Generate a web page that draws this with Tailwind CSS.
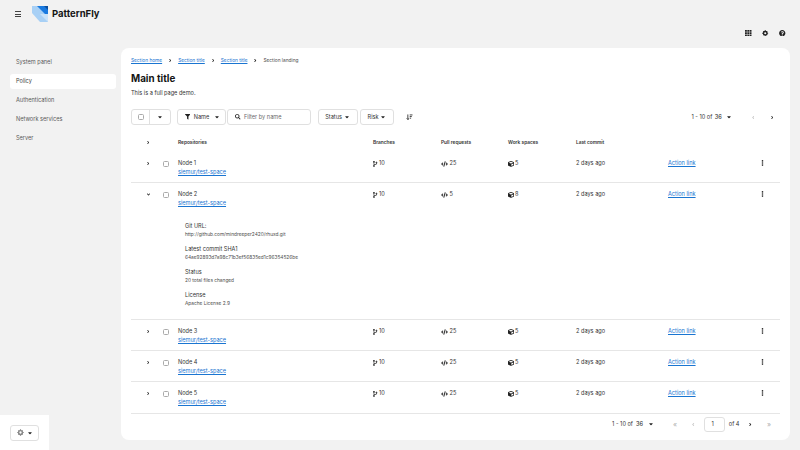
<!DOCTYPE html>
<html lang="en">
<head>
    <meta charset="UTF-8">
    <title>PatternFly - Full page demo</title>
    <script src="https://cdn.jsdelivr.net/npm/@tailwindcss/browser@4"></script>
</head>
<body>
    <!-- shared icons -->
    <svg class="hidden">
        <symbol id="i-right" viewBox="0 0 256 512"><path d="M224.3 273l-136 136c-9.4 9.4-24.6 9.4-33.9 0l-22.6-22.6c-9.4-9.4-9.4-24.6 0-33.9l96.4-96.4-96.4-96.4c-9.4-9.4-9.4-24.6 0-33.9L54.3 103c9.4-9.4 24.6-9.4 33.9 0l136 136c9.5 9.4 9.5 24.6.1 34z"/></symbol>
        <symbol id="i-left" viewBox="0 0 256 512"><path d="M31.7 239l136-136c9.4-9.4 24.6-9.4 33.9 0l22.6 22.6c9.4 9.4 9.4 24.6 0 33.9L127.9 256l96.4 96.4c9.4 9.4 9.4 24.6 0 33.9L201.7 409c-9.4 9.4-24.6 9.4-33.9 0l-136-136c-9.5-9.4-9.5-24.6-.1-34z"/></symbol>
        <symbol id="i-caret" viewBox="0 0 320 512"><path d="M31.3 192h257.3c17.8 0 26.7 21.5 14.1 34.1L174.1 354.8c-7.8 7.8-20.5 7.8-28.3 0L17.2 226.1C4.6 213.5 13.5 192 31.3 192z"/></symbol>
        <symbol id="i-branch" viewBox="0 0 384 512"><path d="M384 144c0-44.2-35.8-80-80-80s-80 35.8-80 80c0 36.4 24.3 67.1 57.5 76.8-.6 16.1-4.2 28.5-11 36.9-15.4 19.2-49.3 22.4-85.2 25.7-28.2 2.6-57.4 5.4-81.3 16.9v-144c32.5-10.2 56-40.5 56-76.3 0-44.2-35.8-80-80-80S0 35.8 0 80c0 35.8 23.5 66.1 56 76.3v199.3C23.5 365.9 0 396.2 0 432c0 44.2 35.8 80 80 80s80-35.8 80-80c0-34-21.2-63.1-51.2-74.6 3.1-5.2 7.8-9.8 14.9-13.4 16.2-8.2 40.4-10.4 66.1-12.8 42.2-3.9 90-8.4 118.2-43.4 14-17.4 21.1-39.8 21.6-67.9 31.6-10.8 54.4-40.7 54.4-75.9zM80 64c8.8 0 16 7.2 16 16s-7.2 16-16 16-16-7.2-16-16 7.2-16 16-16zm0 384c-8.8 0-16-7.2-16-16s7.2-16 16-16 16 7.2 16 16-7.2 16-16 16zm224-320c8.8 0 16 7.2 16 16s-7.2 16-16 16-16-7.2-16-16 7.2-16 16-16z"/></symbol>
        <symbol id="i-code" viewBox="0 0 640 512"><path d="M278.9 511.5l-61-17.7c-6.4-1.8-10-8.5-8.2-14.9L346.2 8.7c1.8-6.4 8.5-10 14.9-8.2l61 17.7c6.4 1.8 10 8.5 8.2 14.9L293.8 503.3c-1.9 6.4-8.5 10.1-14.9 8.2zm-114-112.2l43.5-46.4c4.6-4.9 4.3-12.7-.8-17.2L117 256l90.6-79.7c5.1-4.5 5.5-12.3.8-17.2l-43.5-46.4c-4.5-4.8-12.1-5.1-17-.5L3.8 247.2c-5.1 4.7-5.1 12.8 0 17.5l144.1 135.1c4.9 4.6 12.5 4.4 17-.5zm327.2.6l144.1-135.1c5.1-4.7 5.1-12.8 0-17.5L492.1 112.1c-4.8-4.5-12.4-4.3-17 .5L431.6 159c-4.6 4.9-4.3 12.7.8 17.2L523 256l-90.6 79.7c-5.1 4.5-5.5 12.3-.8 17.2l43.5 46.4c4.5 4.9 12.1 5.1 17 .6z"/></symbol>
        <symbol id="i-cube" viewBox="0 0 512 512"><path d="M239.1 6.3l-208 78c-18.7 7-31.1 25-31.1 45v225.1c0 18.2 10.3 34.8 26.5 42.9l208 104c13.5 6.8 29.4 6.8 42.9 0l208-104c16.3-8.1 26.5-24.8 26.5-42.9V129.3c0-20-12.4-37.9-31.1-44.9l-208-78C262 2.2 250 2.2 239.1 6.3zM256 68.4l192 72v1.1l-192 78-192-78v-1.1l192-72zm32 356V275.5l160-65v133.9l-160 80z"/></symbol>
        <symbol id="i-kebab" viewBox="0 0 192 512"><path d="M96 184c39.8 0 72 32.2 72 72s-32.2 72-72 72-72-32.2-72-72 32.2-72 72-72zM24 80c0 39.8 32.2 72 72 72s72-32.2 72-72S135.800 8 96 8 24 40.200 24 80zm0 352c0 39.800 32.200 72 72 72s72-32.200 72-72-32.200-72-72-72-72 32.200-72 72z"/></symbol>
        <symbol id="i-gear" viewBox="0 0 24 24"><circle cx="12" cy="12" r="6.500" fill="none" stroke="currentColor" stroke-width="5"/><path d="M10 1h4v4h-4zM10 19h4v4h-4zM1 10h4v4H1zM19 10h4v4h-4zM3.500 6.300l2.800-2.800 2.800 2.800-2.800 2.800zM14.900 17.700l2.800-2.800 2.800 2.800-2.800 2.800zM3.500 17.700l2.800-2.800 2.800 2.800-2.800 2.800zM14.900 6.300l2.800-2.800 2.800 2.800-2.800 2.800z"/></symbol>
    </svg>

    <div class="w-[800px] h-[450px] overflow-hidden relative bg-[#f2f2f2] text-[#151515] text-[5.600px] leading-[9px] flex flex-col font-['Inter',sans-serif]">
        <!-- Masthead -->
        <header class="h-[48px] shrink-0 flex items-start">
            <div class="flex items-center pl-[15px] pt-[6px]">
                <div class="w-[6px] flex flex-col gap-[1.500px]">
                    <span class="h-px bg-[#444]"></span><span class="h-px bg-[#444]"></span><span class="h-px bg-[#444]"></span>
                </div>
                <svg class="ml-[11px] w-[16px] h-[16px]" viewBox="0 0 16 16">
                    <path d="M0 0h16v16H8L0 7z" fill="#a8d0f5"/>
                    <path d="M5 0h11v11z" fill="#1a7ae0"/>
                    <path d="M8 8l8 8V8z" fill="#c9e2f9"/>
                    <path d="M12 0h4v4z" fill="#0b4f9e"/>
                </svg>
                <span class="ml-[4px] text-[9.500px] font-bold leading-[14px]">PatternFly</span>
            </div>
            <div class="ml-auto flex items-center gap-[10.500px] pr-[14.500px] pt-[29.500px]">
                <svg class="w-[6.500px] h-[6.500px] fill-[#222]" viewBox="0 0 7 7"><path d="M0 0h2v2H0zM2.500 0h2v2h-2zM5 0h2v2H5zM0 2.500h2v2H0zM2.500 2.500h2v2h-2zM5 2.500h2v2H5zM0 5h2v2H0zM2.500 5h2v2h-2zM5 5h2v2H5z"/></svg>
                <svg class="w-[6.500px] h-[6.500px] fill-[#222] text-[#222]"><use href="#i-gear"/></svg>
                <svg class="w-[6.500px] h-[6.500px] fill-[#222]" viewBox="0 0 512 512"><path d="M504 256c0 136.997-111.043 248-248 248S8 392.997 8 256C8 119.083 119.043 8 256 8s248 111.083 248 248zM262.655 90c-54.497 0-89.255 22.957-116.549 63.758-3.536 5.286-2.353 12.415 2.715 16.258l34.699 26.31c5.205 3.947 12.621 3.008 16.665-2.122 17.864-22.658 30.113-35.797 57.303-35.797 20.429 0 45.698 13.148 45.698 32.958 0 14.976-12.363 22.667-32.534 33.976C247.128 238.528 216 254.941 216 296v4c0 6.627 5.373 12 12 12h56c6.627 0 12-5.373 12-12v-1.333c0-28.462 83.186-29.647 83.186-106.667 0-58.002-60.165-102-116.531-102zM256 338c-25.365 0-46 20.635-46 46 0 25.364 20.635 46 46 46s46-20.636 46-46c0-25.365-20.635-46-46-46z"/></svg>
            </div>
        </header>

        <div class="flex flex-1 min-h-0">
            <!-- Sidebar -->
            <nav class="w-[121px] shrink-0 flex flex-col pl-[10px] pr-[5px] pt-[5px] text-[#5a5a5a] text-[5.600px]">
                <a class="h-[14.900px] my-[2px] pl-[6px] flex items-center">System panel</a>
                <a class="h-[14.900px] my-[2px] pl-[6px] flex items-center bg-white rounded-[3px] text-[#444]">Policy</a>
                <a class="h-[14.900px] my-[2px] pl-[6px] flex items-center">Authentication</a>
                <a class="h-[14.900px] my-[2px] pl-[6px] flex items-center">Network services</a>
                <a class="h-[14.900px] my-[2px] pl-[6px] flex items-center">Server</a>
            </nav>

            <!-- Main card -->
            <main class="w-[669px] h-[392px] bg-white rounded-[8px] px-[10px] pt-[8px]">
                <div class="flex items-center h-[9px] text-[4.800px] text-[#4d4d4d]">
                    <a class="text-[#1a75d1] underline">Section home</a>
                    <svg class="w-[2.500px] h-[5px] mx-[6.750px] fill-[#222]"><use href="#i-right"/></svg>
                    <a class="text-[#1a75d1] underline">Section title</a>
                    <svg class="w-[2.500px] h-[5px] mx-[6.750px] fill-[#222]"><use href="#i-right"/></svg>
                    <a class="text-[#1a75d1] underline">Section title</a>
                    <svg class="w-[2.500px] h-[5px] mx-[6.750px] fill-[#222]"><use href="#i-right"/></svg>
                    <span>Section landing</span>
                </div>
                <h1 class="mt-[8px] text-[9.800px] leading-[12px] font-bold">Main title</h1>
                <p class="mt-[3.500px] text-[#333]">This is a full page demo.</p>

                <!-- Toolbar -->
                <div class="mt-[11.500px] h-[16px] flex items-center text-[#333]">
                    <div class="flex h-[16px] w-[39.700px] border border-[#e0e0e0] rounded-[3px]">
                        <div class="w-[18px] flex items-center justify-center border-r border-[#e0e0e0]"><span class="w-[6px] h-[6px] border border-[#aaa] rounded-[1.500px]"></span></div>
                        <div class="flex-1 flex items-center justify-center"><svg class="w-[4px] h-[6px] fill-[#222]"><use href="#i-caret"/></svg></div>
                    </div>
                    <div class="ml-[6.500px] flex items-center h-[16px] w-[48.500px] border border-[#e0e0e0] rounded-[3px] pl-[6.500px]">
                        <svg class="w-[5.500px] h-[5.500px] fill-[#222]" viewBox="0 0 512 512"><path d="M487.976 0H24.028C2.71 0-8.047 25.866 7.058 40.971L192 225.941V432c0 7.831 3.821 15.170 10.237 19.662l80 55.980C298.020 518.690 320 507.493 320 487.980V225.941l184.947-184.970C520.021 25.896 509.338 0 487.976 0z"/></svg>
                        <span class="ml-[3.500px]">Name</span>
                        <svg class="ml-[6px] w-[4px] h-[6px] fill-[#222]"><use href="#i-caret"/></svg>
                    </div>
                    <div class="ml-[1.800px] flex items-center h-[16px] w-[84px] border border-[#e0e0e0] rounded-[3px] pl-[7px] text-[#6a6a6a]">
                        <svg class="w-[5.500px] h-[5.500px] fill-[#222]" viewBox="0 0 512 512"><path d="M505 442.700L405.300 343c-4.500-4.500-10.600-7-17-7H372c27.600-35.300 44-79.700 44-128C416 93.100 322.900 0 208 0S0 93.100 0 208s93.100 208 208 208c48.300 0 92.700-16.400 128-44v16.300c0 6.400 2.500 12.500 7 17l99.700 99.700c9.400 9.400 24.600 9.400 33.900 0l28.300-28.300c9.400-9.400 9.400-24.600.1-34zM208 336c-70.700 0-128-57.200-128-128 0-70.700 57.200-128 128-128 70.700 0 128 57.200 128 128 0 70.700-57.200 128-128 128z"/></svg>
                        <span class="ml-[3px]">Filter by name</span>
                    </div>
                    <div class="ml-[6.300px] flex items-center h-[16px] w-[40.700px] border border-[#e0e0e0] rounded-[3px] pl-[6.500px]">
                        <span>Status</span>
                        <svg class="ml-auto mr-[8px] w-[4px] h-[6px] fill-[#222]"><use href="#i-caret"/></svg>
                    </div>
                    <div class="ml-[1.600px] flex items-center h-[16px] w-[34.400px] border border-[#e0e0e0] rounded-[3px] pl-[6.500px]">
                        <span>Risk</span>
                        <svg class="ml-auto mr-[8px] w-[4px] h-[6px] fill-[#222]"><use href="#i-caret"/></svg>
                    </div>
                    <svg class="ml-[11.700px] w-[6.500px] h-[6.500px] fill-none stroke-[#222]" viewBox="0 0 14 14" stroke-width="1.800"><path d="M4 1v11M1.500 9.500L4 12l2.500-2.500M8 2h6M8 5.500h4.500M8 9h3"/></svg>

                    <div class="ml-auto flex items-center">
                        <span>1 - 10 of</span>
                        <span class="ml-[2.500px] font-medium">36</span>
                        <svg class="ml-[5px] w-[4px] h-[6px] fill-[#222]"><use href="#i-caret"/></svg>
                        <svg class="ml-[21px] w-[2.500px] h-[5px] fill-[#c4c4c4]"><use href="#i-left"/></svg>
                        <svg class="ml-[16.500px] mr-[6.750px] w-[2.500px] h-[5px] fill-[#222]"><use href="#i-right"/></svg>
                    </div>
                </div>

                <!-- Table -->
                <div class="mt-[7px] grid grid-cols-[29px_18px_195px_68px_67px_68px_92px_93px_1fr] h-[20px] items-center text-[4.800px] font-semibold text-[#333]">
                    <svg class="ml-[15.500px] w-[2.500px] h-[5px] fill-[#222]"><use href="#i-right"/></svg>
                    <span></span>
                    <span>Repositories</span>
                    <span>Branches</span>
                    <span>Pull requests</span>
                    <span>Work spaces</span>
                    <span>Last commit</span>
                </div>

                <div class="grid grid-cols-[29px_18px_195px_68px_67px_68px_92px_93px_1fr] h-[31px] pt-[7px] items-start content-start border-b border-[#e6e6e6] text-[#333]">
                    <svg class="ml-[15.500px] mt-[2px] w-[2.500px] h-[5px] fill-[#222]"><use href="#i-right"/></svg>
                    <span class="ml-[3px] mt-[1.500px] w-[6px] h-[6px] border border-[#aaa] rounded-[1.500px]"></span>
                    <div><div>Node 1</div><a class="text-[#1a75d1] underline">siemur/test-space</a></div>
                    <div class="flex items-center h-[9px]"><svg class="w-[4.500px] h-[6px] fill-[#222] mr-[1.500px]"><use href="#i-branch"/></svg>10</div>
                    <div class="flex items-center h-[9px]"><svg class="w-[7px] h-[6px] fill-[#222] mr-[1.500px]"><use href="#i-code"/></svg>25</div>
                    <div class="flex items-center h-[9px]"><svg class="w-[6px] h-[6px] fill-[#222] mr-[1px]"><use href="#i-cube"/></svg>5</div>
                    <div>2 days ago</div>
                    <a class="text-[#1a75d1] underline">Action link</a>
                    <svg class="w-[3px] h-[6px] mt-[1px] fill-[#222]"><use href="#i-kebab"/></svg>
                </div>

                <div class="grid grid-cols-[29px_18px_195px_68px_67px_68px_92px_93px_1fr] h-[137px] pt-[7px] items-start content-start border-b border-[#e6e6e6] text-[#333]">
                    <svg class="ml-[14.500px] mt-[2px] w-[5px] h-[5px] fill-[#222]" viewBox="0 0 320 512"><path d="M143 352.300L7 216.300c-9.400-9.400-9.400-24.600 0-33.900l22.600-22.600c9.400-9.400 24.600-9.400 33.900 0l96.400 96.400 96.400-96.400c9.400-9.400 24.600-9.400 33.900 0l22.600 22.600c9.400 9.400 9.400 24.600 0 33.900l-136 136c-9.200 9.400-24.400 9.400-33.800 0z"/></svg>
                    <span class="ml-[3px] mt-[1.500px] w-[6px] h-[6px] border border-[#aaa] rounded-[1.500px]"></span>
                    <div><div>Node 2</div><a class="text-[#1a75d1] underline">siemur/test-space</a></div>
                    <div class="flex items-center h-[9px]"><svg class="w-[4.500px] h-[6px] fill-[#222] mr-[1.500px]"><use href="#i-branch"/></svg>10</div>
                    <div class="flex items-center h-[9px]"><svg class="w-[7px] h-[6px] fill-[#222] mr-[1.500px]"><use href="#i-code"/></svg>5</div>
                    <div class="flex items-center h-[9px]"><svg class="w-[6px] h-[6px] fill-[#222] mr-[1px]"><use href="#i-cube"/></svg>8</div>
                    <div>2 days ago</div>
                    <a class="text-[#1a75d1] underline">Action link</a>
                    <svg class="w-[3px] h-[6px] mt-[1px] fill-[#222]"><use href="#i-kebab"/></svg>
                    <!-- Expanded details -->
                    <div class="col-start-3 col-span-7 pl-[7px] pt-[14px] flex flex-col gap-[6.400px]">
                        <div><div class="text-[5.600px] leading-[8.300px]">Git URL:</div><div class="text-[4.800px] leading-[8.300px] text-[#4d4d4d]">http://github.com/mindreeper2420/rhuxd.git</div></div>
                        <div><div class="text-[5.600px] leading-[8.300px]">Latest commit SHA1</div><div class="text-[4.800px] leading-[8.300px] text-[#4d4d4d]">64ae92893d7a98c71b3ef56835ed1c96354526be</div></div>
                        <div><div class="text-[5.600px] leading-[8.300px]">Status</div><div class="text-[4.800px] leading-[8.300px] text-[#4d4d4d]">20 total files changed</div></div>
                        <div><div class="text-[5.600px] leading-[8.300px]">License</div><div class="text-[4.800px] leading-[8.300px] text-[#4d4d4d]">Apache License 2.9</div></div>
                    </div>
                </div>

                <div class="grid grid-cols-[29px_18px_195px_68px_67px_68px_92px_93px_1fr] h-[31px] pt-[7px] items-start content-start border-b border-[#e6e6e6] text-[#333]">
                    <svg class="ml-[15.500px] mt-[2px] w-[2.500px] h-[5px] fill-[#222]"><use href="#i-right"/></svg>
                    <span class="ml-[3px] mt-[1.500px] w-[6px] h-[6px] border border-[#aaa] rounded-[1.500px]"></span>
                    <div><div>Node 3</div><a class="text-[#1a75d1] underline">siemur/test-space</a></div>
                    <div class="flex items-center h-[9px]"><svg class="w-[4.500px] h-[6px] fill-[#222] mr-[1.500px]"><use href="#i-branch"/></svg>10</div>
                    <div class="flex items-center h-[9px]"><svg class="w-[7px] h-[6px] fill-[#222] mr-[1.500px]"><use href="#i-code"/></svg>25</div>
                    <div class="flex items-center h-[9px]"><svg class="w-[6px] h-[6px] fill-[#222] mr-[1px]"><use href="#i-cube"/></svg>5</div>
                    <div>2 days ago</div>
                    <a class="text-[#1a75d1] underline">Action link</a>
                    <svg class="w-[3px] h-[6px] mt-[1px] fill-[#222]"><use href="#i-kebab"/></svg>
                </div>

                <div class="grid grid-cols-[29px_18px_195px_68px_67px_68px_92px_93px_1fr] h-[31px] pt-[7px] items-start content-start border-b border-[#e6e6e6] text-[#333]">
                    <svg class="ml-[15.500px] mt-[2px] w-[2.500px] h-[5px] fill-[#222]"><use href="#i-right"/></svg>
                    <span class="ml-[3px] mt-[1.500px] w-[6px] h-[6px] border border-[#aaa] rounded-[1.500px]"></span>
                    <div><div>Node 4</div><a class="text-[#1a75d1] underline">siemur/test-space</a></div>
                    <div class="flex items-center h-[9px]"><svg class="w-[4.500px] h-[6px] fill-[#222] mr-[1.500px]"><use href="#i-branch"/></svg>10</div>
                    <div class="flex items-center h-[9px]"><svg class="w-[7px] h-[6px] fill-[#222] mr-[1.500px]"><use href="#i-code"/></svg>25</div>
                    <div class="flex items-center h-[9px]"><svg class="w-[6px] h-[6px] fill-[#222] mr-[1px]"><use href="#i-cube"/></svg>5</div>
                    <div>2 days ago</div>
                    <a class="text-[#1a75d1] underline">Action link</a>
                    <svg class="w-[3px] h-[6px] mt-[1px] fill-[#222]"><use href="#i-kebab"/></svg>
                </div>

                <div class="grid grid-cols-[29px_18px_195px_68px_67px_68px_92px_93px_1fr] h-[32px] pt-[7px] items-start content-start border-b border-[#e6e6e6] text-[#333]">
                    <svg class="ml-[15.500px] mt-[2px] w-[2.500px] h-[5px] fill-[#222]"><use href="#i-right"/></svg>
                    <span class="ml-[3px] mt-[1.500px] w-[6px] h-[6px] border border-[#aaa] rounded-[1.500px]"></span>
                    <div><div>Node 5</div><a class="text-[#1a75d1] underline">siemur/test-space</a></div>
                    <div class="flex items-center h-[9px]"><svg class="w-[4.500px] h-[6px] fill-[#222] mr-[1.500px]"><use href="#i-branch"/></svg>10</div>
                    <div class="flex items-center h-[9px]"><svg class="w-[7px] h-[6px] fill-[#222] mr-[1.500px]"><use href="#i-code"/></svg>25</div>
                    <div class="flex items-center h-[9px]"><svg class="w-[6px] h-[6px] fill-[#222] mr-[1px]"><use href="#i-cube"/></svg>5</div>
                    <div>2 days ago</div>
                    <a class="text-[#1a75d1] underline">Action link</a>
                    <svg class="w-[3px] h-[6px] mt-[1px] fill-[#222]"><use href="#i-kebab"/></svg>
                </div>

                <!-- Pagination -->
                <div class="mt-[2px] h-[16px] flex items-center justify-end text-[#333]">
                    <span>1 - 10 of</span>
                    <span class="ml-[3px] font-medium">36</span>
                    <svg class="ml-[6px] w-[4px] h-[6px] fill-[#222]"><use href="#i-caret"/></svg>
                    <span class="ml-[20px] text-[#b0b0b0] text-[7px]">«</span>
                    <svg class="ml-[15px] w-[2.500px] h-[5px] fill-[#c4c4c4]"><use href="#i-left"/></svg>
                    <div class="ml-[9px] w-[21.600px] h-[15px] border border-[#e0e0e0] rounded-[3px] flex items-center pl-[7px]">1</div>
                    <span class="ml-[3.700px]">of 4</span>
                    <svg class="ml-[10px] w-[2.500px] h-[5px] fill-[#222]"><use href="#i-right"/></svg>
                    <span class="ml-[15px] mr-[9px] text-[#b0b0b0] text-[7px]">»</span>
                </div>
            </main>
        </div>

        <!-- Theme switcher, fixed in the corner over the sidebar -->
        <div class="absolute left-0 bottom-0 w-[49px] h-[35px] bg-white flex items-center justify-center">
            <div class="w-[29px] h-[16px] border border-[#e0e0e0] rounded-[3px] flex items-center justify-center gap-[4px]">
                <svg class="w-[7px] h-[7px] fill-[#888] text-[#888]"><use href="#i-gear"/></svg>
                <svg class="w-[4px] h-[6px] fill-[#222]"><use href="#i-caret"/></svg>
            </div>
        </div>
    </div>
</body>
</html>
